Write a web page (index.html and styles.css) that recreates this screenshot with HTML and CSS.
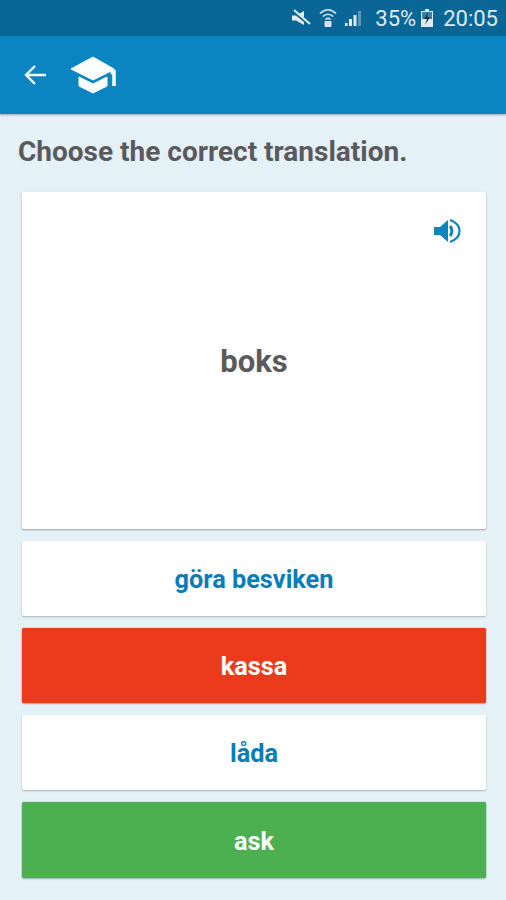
FILE: index.html
```html
<!DOCTYPE html>
<html lang="en">
<head>
<meta charset="utf-8">
<title>Quiz</title>
<link rel="stylesheet" href="styles.css">
</head>
<body>
<div class="status">
  <svg class="st-mute" viewBox="0 0 20 18" width="20" height="18"><path d="M1 6.500h4L13 2v14L5 11.500H1z" fill="#e3edf3"/><path d="M1 1l17 14" stroke="#0a6696" stroke-width="3.400"/><path d="M3 1l16 14" stroke="#e3edf3" stroke-width="2"/></svg>
  <svg class="st-wifi" viewBox="0 0 18 20" width="18" height="20"><path d="M1 5.500c5-5 11-5 16 0M3.800 8.500c3-3 7.400-3 10.400 0M6.500 11.500c1.500-1.400 3.500-1.400 5 0" fill="none" stroke="#d5e3ec" stroke-width="1.700"/><rect x="5.500" y="13" width="7" height="6" rx="1" fill="#d5e3ec"/></svg>
  <svg class="st-signal" viewBox="0 0 18 18" width="18" height="18"><path d="M1 17h2.500v-3H1zM5 17h3v-7H5zM9.500 17h3V6h-3z" fill="#dfeaf1"/><path d="M14 17h3V2h-3z" fill="#5f95b6"/></svg>
  <span class="st-pct">35%</span>
  <svg class="st-batt" viewBox="0 0 14 20" width="14" height="20"><path d="M5 1h4v2h4v16H1V3h4z" fill="#dfeaf1"/><path d="M2 4h10v7H2z" fill="#3f7fa3"/><path d="M8.500 3.500L4 11h3l-2 6 5-8H7z" fill="#1b2d3a"/></svg>
  <span class="st-time">20:05</span>
</div>
<header class="appbar">
  <svg class="back" viewBox="0 0 24 24" width="24" height="24"><path d="M23 12H3M12 3l-9 9 9 9" fill="none" stroke="#f2f8fb" stroke-width="2.400"/></svg>
  <svg class="cap" viewBox="0 0 48 38" width="48" height="38"><path d="M23 1L1 13l22 11 18-9v3l3-1v-4z" fill="#fff" stroke="#fff" stroke-linejoin="round"/><path d="M9 21l14 7 14-7v9l-14 7-14-7z" fill="#fff" stroke="#fff" stroke-linejoin="round"/><path d="M44 14v16" stroke="#fff" stroke-width="3.500"/></svg>
</header>
<main class="content">
  <h1 class="prompt">Choose the correct translation.</h1>
  <section class="card">
    <svg class="sound" viewBox="0 0 28 28" width="28" height="28"><path d="M1 10h6l8-7v22l-8-7H1z" fill="#0a85c2"/><path d="M17 9c2.500 2.500 2.500 7.500 0 10" fill="none" stroke="#0a85c2" stroke-width="3"/><path d="M17 3c7 2.500 9.500 7 9.500 11s-2.500 8.500-9.500 11" fill="none" stroke="#0a85c2" stroke-width="2.200"/></svg>
    <span class="word">boks</span>
  </section>
  <button class="option">göra besviken</button>
  <button class="option wrong">kassa</button>
  <button class="option">låda</button>
  <button class="option right">ask</button>
</main>
</body>
</html>
```

FILE: styles.css
```css
* { box-sizing: border-box; }
html, body { margin: 0; height: 900px; overflow: hidden; }
body {
  width: 506px;
  background: #e4f1f7;
  font-family: Roboto, "Liberation Sans", sans-serif;
}
.status {
  height: 36px;
  background: #0a6696;
  color: #dfeaf1;
  display: flex;
  align-items: center;
  justify-content: flex-end;
  padding-right: 8px;
  font-size: 22px;
}
.st-mute { margin-right: 8px; }
.st-wifi { margin-right: 7px; }
.st-signal { margin-right: 13px; }
.st-pct { margin-right: 4px; }
.st-batt { margin-right: 9px; }
.appbar {
  height: 78px;
  background: #0a85c2;
  display: flex;
  align-items: center;
  padding-left: 23px;
  box-shadow: 0 1px 2px rgba(40, 70, 90, .45);
}
.back { margin-right: 23px; }
.content {
  padding: 0 20px 0 22px;
  display: flex;
  flex-direction: column;
}
.prompt {
  margin: 21px 0 23px -4px;
  font-size: 28px;
  line-height: 34px;
  font-weight: 700;
  color: #5a5a5c;
  white-space: nowrap;
}
.card {
  height: 337px;
  padding-top: 2px;
  background: #fff;
  border-radius: 2px;
  box-shadow: 0 1px 2px rgba(60, 70, 80, .45);
  display: flex;
  align-items: center;
  justify-content: center;
  position: relative;
  margin-bottom: 12px;
}
.sound { position: absolute; top: 25px; right: 25px; }
.word {
  font-size: 31px;
  font-weight: 700;
  color: #5a5a5c;
}
.option {
  height: 75px;
  margin: 0 0 12px;
  padding: 2px 0 0;
  border: 0;
  border-radius: 2px;
  background: #fff;
  color: #0a7cba;
  font-family: inherit;
  font-size: 25.300px;
  font-weight: 700;
  box-shadow: 0 1px 2px rgba(60, 70, 80, .35);
}
.wrong { background: #eb3b1c; color: #fff; box-shadow: 0 0 1px 0 #d9230c, 0 1px 2px rgba(60, 70, 80, .35); }
.right { background: #4caf50; color: #fff; box-shadow: 0 0 1px 0 #3a9a40, 0 1px 2px rgba(60, 70, 80, .35); height: 76px; }
```
